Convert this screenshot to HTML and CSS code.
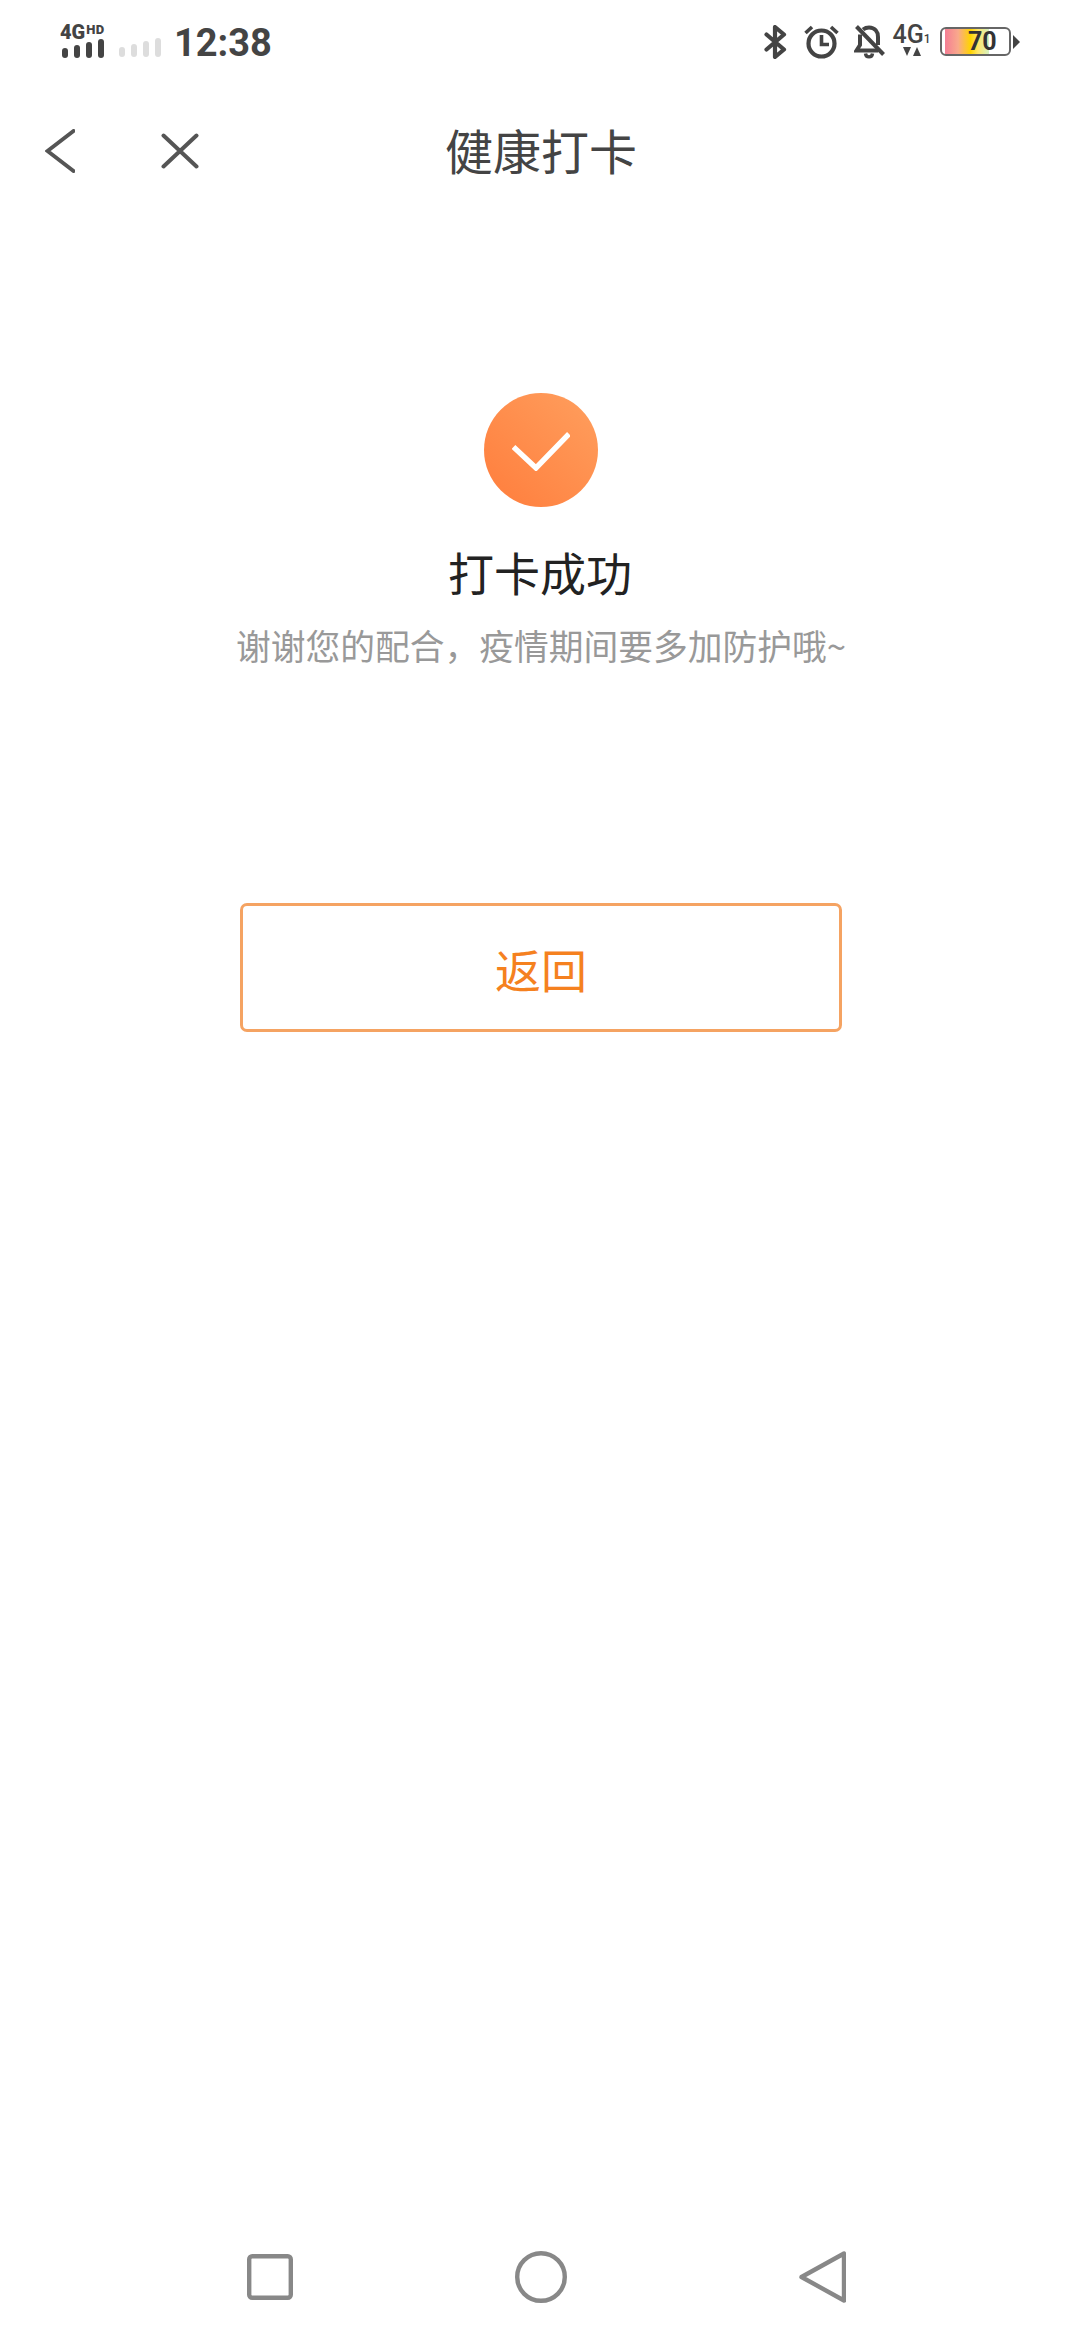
FILE: index.html
```html
<!DOCTYPE html>
<html lang="zh-CN">
<head>
    <meta charset="UTF-8">
    <meta name="viewport" content="width=device-width, initial-scale=1.0">
    <title>健康打卡</title>
    <link rel="stylesheet" href="styles.css">
</head>
<body>
    <div class="status-bar">
        <div class="network">
            <div class="network-label"><span class="net-4g">4G</span><span class="net-hd">HD</span></div>
            <div class="bars">
                <i class="bar b1"></i><i class="bar b2"></i><i class="bar b3"></i><i class="bar b4"></i>
            </div>
        </div>
        <div class="bars bars-off">
            <i class="bar b1"></i><i class="bar b2"></i><i class="bar b3"></i><i class="bar b4"></i>
        </div>
        <div class="clock">12:38</div>

        <div class="status-icons">
            <svg class="ic-bt" width="23" height="34" viewBox="0 0 23 34" fill="none" stroke="#444" stroke-width="4.2" stroke-linejoin="round" stroke-linecap="round">
                <path d="M2.5 9.5 L20 24.5 L11 32 V2 L20 9.5 L2.5 24.5"/>
            </svg>
            <svg class="ic-alarm" width="35" height="34" viewBox="0 0 35 34" fill="none" stroke="#444" stroke-width="4.2">
                <circle cx="17.5" cy="18.5" r="13"/>
                <path d="M17.5 10 V19.5 H25" stroke-width="3.6"/>
                <path d="M1.5 8 L8 2 M33.5 8 L27 2" stroke-width="3.6"/>
            </svg>
            <svg class="ic-bell" width="31" height="34" viewBox="0 0 31 34" fill="none" stroke="#444" stroke-width="4">
                <path d="M9 4.5 C11 3 13 2.5 15 2.5 C21 2.5 24 7 24 12 V20"/>
                <path d="M6 9.5 V20 L2.5 25.5 H24"/>
                <path d="M11.5 28.5 C12 33 18 33 18.5 28.5" stroke-width="3.4"/>
                <path d="M2.5 1.5 L29.5 29.5"/>
            </svg>
            <div class="net-sim">
                <div class="sim-label">4G<span class="sim-num">1</span></div>
                <svg width="18" height="9" viewBox="0 0 18 9" fill="#444">
                    <path d="M0 0 H8 L4 9 Z"/>
                    <path d="M14 0 L18 9 H10 Z" />
                </svg>
            </div>
            <div class="battery">
                <div class="battery-body">
                    <div class="battery-fill"></div>
                    <span class="battery-num">70</span>
                </div>
                <i class="battery-tip"></i>
            </div>
        </div>
    </div>

    <div class="header">
        <div class="header-btns">
            <svg class="ic-back" width="30" height="44" viewBox="0 0 30 44" fill="none" stroke="#555" stroke-width="4" stroke-linecap="round">
                <path d="M28.5 2 L2.5 22 L28.5 42"/>
            </svg>
            <svg class="ic-close" width="38" height="36" viewBox="0 0 38 36" fill="none" stroke="#555" stroke-width="4" stroke-linecap="round">
                <path d="M2.5 2.5 L35.5 33.5 M35.5 2.5 L2.5 33.5"/>
            </svg>
        </div>
        <h1 class="title">健康打卡</h1>
    </div>

    <div class="main">
        <div class="success-icon">
            <svg width="58" height="40" viewBox="0 0 58 40" fill="none" stroke="#fff" stroke-width="5.4">
                <path d="M1.5 16 L24 37 L57 3"/>
            </svg>
        </div>
        <h2 class="result">打卡成功</h2>
        <p class="note">谢谢您的配合，疫情期间要多加防护哦~</p>
        <a class="back-btn">返回</a>
    </div>

    <div class="nav-bar">
        <svg class="nav-square" width="46" height="46" viewBox="0 0 46 46" fill="none" stroke="#888" stroke-width="4.4">
            <rect x="2.2" y="2.2" width="41.6" height="41.6" rx="3"/>
        </svg>
        <svg class="nav-circle" width="52" height="52" viewBox="0 0 52 52" fill="none" stroke="#888" stroke-width="4.4">
            <circle cx="26" cy="26" r="23.8"/>
        </svg>
        <svg class="nav-back" width="47" height="52" viewBox="0 0 47 52" fill="none" stroke="#888" stroke-width="4.4" stroke-linejoin="round">
            <path d="M45 2.5 V49.5 L2.5 26 Z" />
        </svg>
    </div>
</body>
</html>
```

FILE: styles.css
```css
* {
    box-sizing: border-box;
}

body {
    font-family: "Noto Sans CJK SC", Roboto, sans-serif;
    background: #fff;
    margin: 0;
    width: 1080px;
    height: 2340px;
    display: flex;
    flex-direction: column;
}

/* status bar */
.status-bar {
    height: 64px;
    padding: 24px 60px 0 60px;
    display: flex;
    align-items: flex-start;
    font-family: Roboto, sans-serif;
    color: #444;
}

.network {
    width: 59px;
}

.network-label {
    display: flex;
    height: 15px;
    line-height: 15px;
    font-weight: 900;
}

.net-4g {
    font-size: 20px;
    margin-top: 1px;
}

.net-hd {
    font-size: 13px;
    margin-left: 1px;
    margin-top: -2px;
    letter-spacing: 0.5px;
}

.bars {
    display: flex;
    align-items: flex-end;
    gap: 6px;
    height: 19px;
    padding-left: 2px;
}

.bars-off {
    margin-top: 14px;
    padding-left: 0;
}

.bar {
    display: block;
    width: 6px;
    background: #444;
    border-radius: 3px;
}

.bars-off .bar {
    background: #ddd;
}

.b1 { height: 10px; }
.b2 { height: 13px; }
.b3 { height: 16px; }
.b4 { height: 19px; }

.clock {
    margin-left: 13px;
    font-size: 38px;
    font-weight: 700;
    line-height: 38px;
}

.status-icons {
    margin-left: auto;
    display: flex;
    align-items: flex-start;
    margin-top: 1px;
}

.ic-alarm { margin-left: 17px; }
.ic-bell { margin-left: 15px; }

.net-sim {
    margin-left: 10px;
    width: 33px;
    display: flex;
    flex-direction: column;
    align-items: center;
}

.sim-label {
    font-size: 25px;
    line-height: 20px;
    height: 22px;
    font-weight: 500;
    white-space: nowrap;
}

.sim-num {
    font-size: 12px;
}

.battery {
    margin-left: 12px;
    margin-top: 2px;
    display: flex;
    align-items: center;
}

.battery-body {
    position: relative;
    width: 71px;
    height: 29px;
    border: 2px solid #666;
    border-radius: 6px;
}

.battery-fill {
    height: 100%;
    width: 44px;
    margin-left: 3px;
    background: linear-gradient(90deg, #f47e94 0%, #f9a98c 30%, #ffd400 58%, #ffe66a 75%, #d6f3c4 100%);
}

.battery-num {
    position: absolute;
    left: 26px;
    top: 0;
    font-size: 25px;
    font-weight: 700;
    line-height: 25px;
    color: #333;
}

.battery-tip {
    margin-left: 2px;
    width: 0;
    height: 0;
    border-left: 7px solid #444;
    border-top: 7px solid transparent;
    border-bottom: 7px solid transparent;
}

/* title bar */
.header {
    margin-top: 39px;
    height: 92px;
    position: relative;
    display: flex;
    align-items: center;
    justify-content: center;
}

.header-btns {
    position: absolute;
    left: 45px;
    top: 26px;
    display: flex;
    align-items: center;
    gap: 86px;
}

.title {
    margin: 0 0 0 2px;
    font-size: 48px;
    font-weight: 400;
    line-height: 92px;
    color: #444;
}

/* result */
.main {
    flex: 1;
    padding-top: 198px;
    display: flex;
    flex-direction: column;
    align-items: center;
}

.success-icon {
    width: 114px;
    height: 114px;
    margin-left: 2px;
    border-radius: 50%;
    background: linear-gradient(45deg, #ff7d3c 0%, #ff9f5e 100%);
    display: flex;
    align-items: center;
    justify-content: center;
    padding-top: 2px;
}

.result {
    margin: 32px 0 0 0;
    font-size: 46px;
    font-weight: 400;
    line-height: 64px;
    color: #222;
}

.note {
    margin: 17px 0 0 2px;
    font-size: 34.75px;
    line-height: 50px;
    color: #999;
}

.back-btn {
    margin: 233px 0 0 2px;
    width: 602px;
    height: 129px;
    border: 3px solid #f5a362;
    border-radius: 7px;
    color: #f5811f;
    font-size: 46px;
    display: flex;
    align-items: center;
    justify-content: center;
}

/* system nav */
.nav-bar {
    height: 89px;
    padding-left: 247px;
    display: flex;
    align-items: flex-start;
}

.nav-square { margin-top: 3px; }
.nav-circle { margin-left: 222px; }
.nav-back { margin-left: 232px; }
```
